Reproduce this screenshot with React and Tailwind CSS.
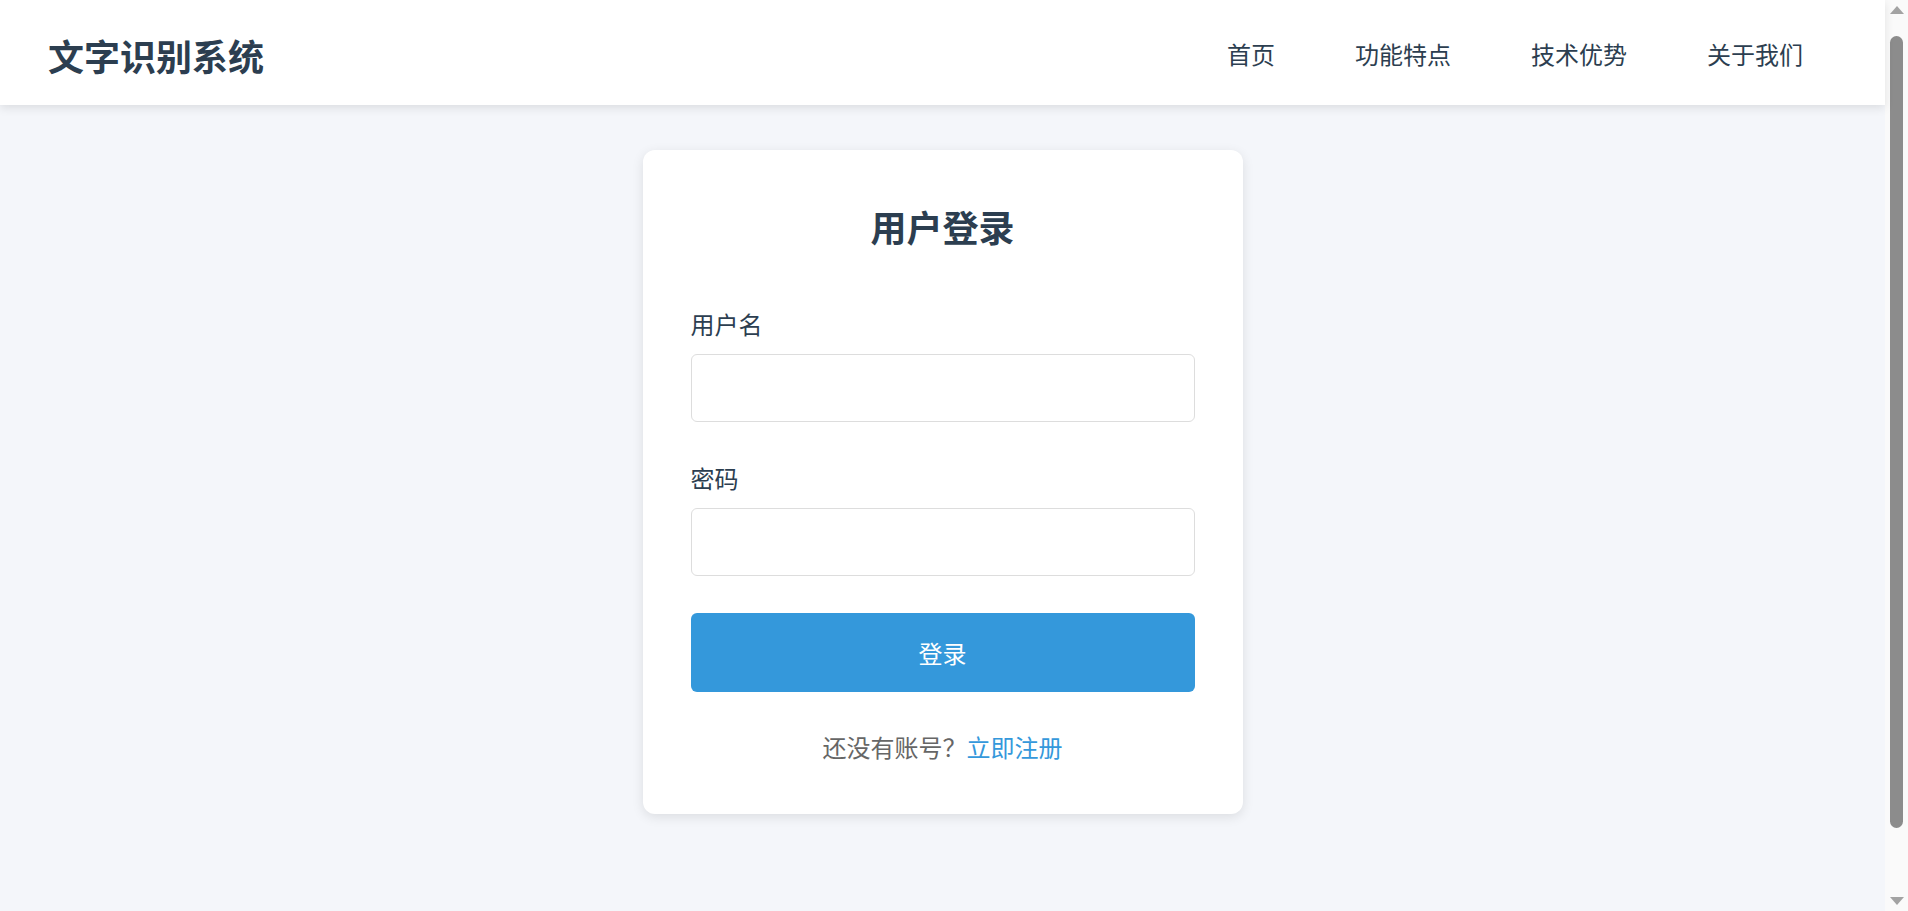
import React from "react";

const navLinks = ["首页", "功能特点", "技术优势", "关于我们"];

const Header = () => (
  <header className="relative z-10 h-[105px] bg-white shadow-[0_3px_9px_rgba(0,0,0,0.1)] flex items-center justify-between pl-[48px] pr-[82px]">
    <h1 className="text-[36px] leading-[50px] font-bold text-[#2c3e50] mt-[4px]">文字识别系统</h1>
    <nav className="flex items-center gap-[80px] mt-[2px]">
      {navLinks.map((l) => (
        <a key={l} href="#" className="text-[24px] leading-[36px] text-[#2c3e50]">
          {l}
        </a>
      ))}
    </nav>
  </header>
);

const Field = ({ label, type, className }) => (
  <div className={className}>
    <label className="block text-[24px] leading-[36px] text-[#2c3e50] mb-[12px]">{label}</label>
    <input
      type={type}
      className="block w-full h-[68px] rounded-[6px] border-[1.5px] border-[#dddddd] bg-white px-[18px] text-[24px] outline-none"
    />
  </div>
);

// the browser's scrollbar as it shows in the picture
const Scrollbar = () => (
  <div className="w-[23px] shrink-0 bg-[#fafafa] flex flex-col items-center">
    <div className="h-[20px] flex items-center justify-center">
      <svg width="14" height="8" viewBox="0 0 14 8">
        <path d="M7 0 L14 8 L0 8 Z" fill="#a3a3a3" />
      </svg>
    </div>
    <div className="mt-[16px] w-[13px] h-[792px] rounded-full bg-[#8c8c8c]" />
    <div className="flex-1" />
    <div className="h-[20px] flex items-center justify-center">
      <svg width="14" height="8" viewBox="0 0 14 8">
        <path d="M0 0 L14 0 L7 8 Z" fill="#a3a3a3" />
      </svg>
    </div>
  </div>
);

export default function App() {
  return (
    <div className="flex h-screen overflow-hidden bg-[#f4f6fa] font-['Noto_Sans_CJK_SC','Noto_Sans',sans-serif]">
      <div className="flex-1 min-w-0">
        <Header />
        <main className="pt-[45px]">
          <div className="mx-auto w-[600px] rounded-[12px] bg-white px-[48px] pt-[48px] pb-[49px] shadow-[0_3px_12px_rgba(0,0,0,0.1)]">
            <h2 className="text-center text-[36px] leading-[57px] font-bold text-[#2c3e50] mb-[51px]">用户登录</h2>
            <Field label="用户名" type="text" className="mb-[38px]" />
            <Field label="密码" type="password" className="mb-[37px]" />
            <button className="block w-full h-[79px] rounded-[6px] bg-[#3498db] text-[24px] text-white">登录</button>
            <p className="mt-[37px] text-center text-[24px] leading-[36px] text-[#666666]">
              还没有账号？<a href="#" className="text-[#3498db]">立即注册</a>
            </p>
          </div>
        </main>
      </div>
      <Scrollbar />
    </div>
  );
}
